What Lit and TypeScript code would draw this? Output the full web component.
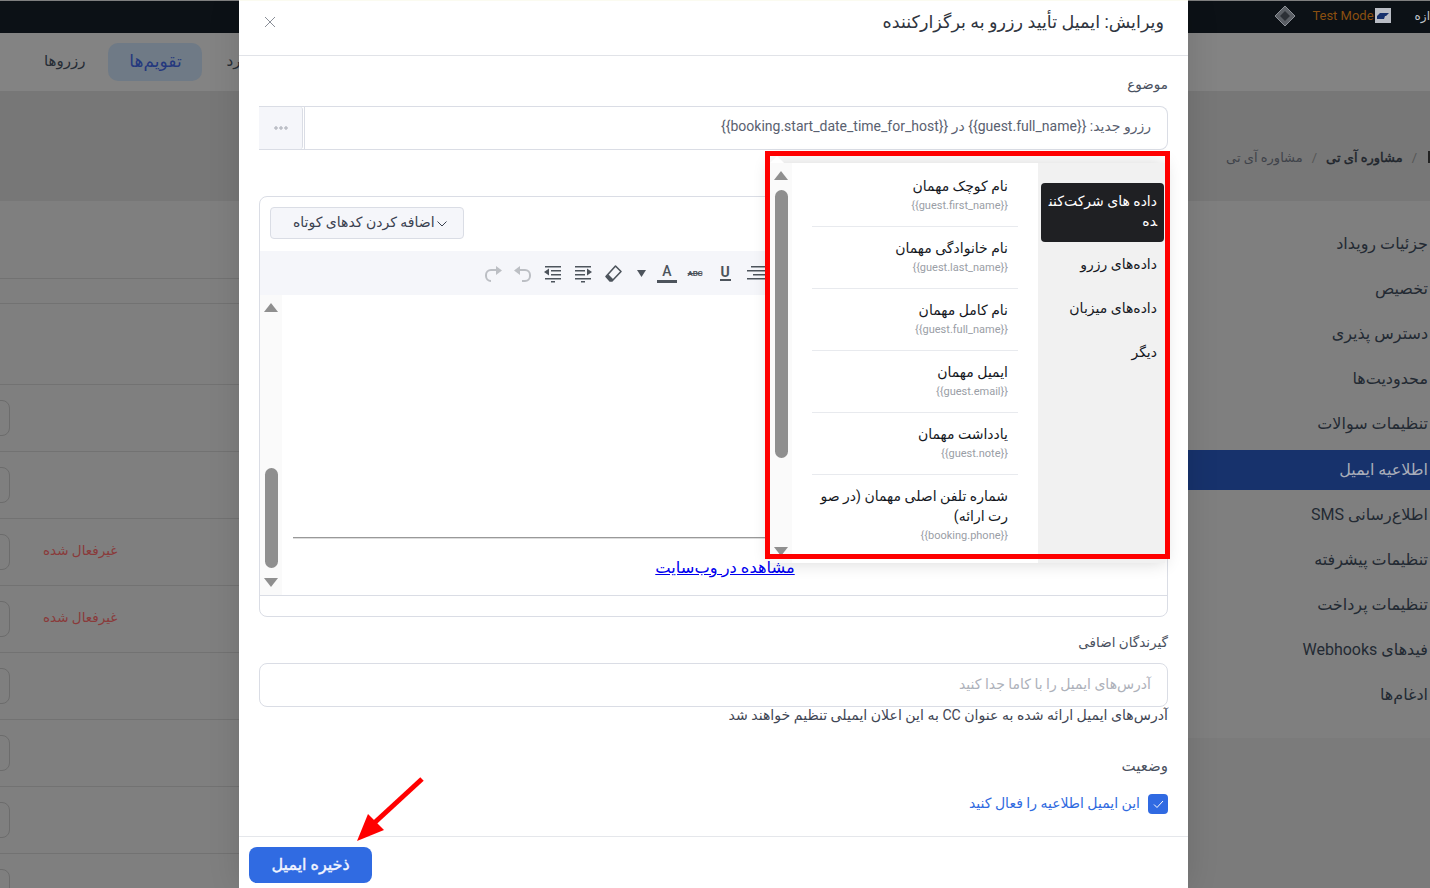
import { LitElement, html, css, svg } from "lit";
import { customElement } from "lit/decorators.js";

const sideItems = ["جزئیات رویداد","تخصیص","دسترس پذیری","محدودیت‌ها","تنظیمات سوالات","اطلاعیه ایمیل","اطلاع‌رسانی SMS","تنظیمات پیشرفته","تنظیمات پرداخت","فیدهای Webhooks","ادغام‌ها"];
const vars = [
  ["نام کوچک مهمان","{{guest.first_name}}"],
  ["نام خانوادگی مهمان","{{guest.last_name}}"],
  ["نام کامل مهمان","{{guest.full_name}}"],
  ["ایمیل مهمان","{{guest.email}}"],
  ["یادداشت مهمان","{{guest.note}}"],
  ["شماره تلفن اصلی مهمان (در صورت ارائه)","{{booking.phone}}"],
];
const rows = [false,false,true,true,false,false,false,false];

const ic = (c: unknown) => html`<svg class="ico" viewBox="0 0 20 20" width="20" height="20">${c}</svg>`;
const lines = (arr: number[][], col: string) => arr.map(([x1,x2,y]) => svg`<rect x=${x1} y=${y} width=${x2-x1} height="1.5" fill=${col}></rect>`);
const dk = "#4d545c";

@customElement("app-root")
export class AppRoot extends LitElement {
  static styles = css`
    :host { display: block; width: 1430px; height: 888px; position: relative; overflow: hidden; font-family: Roboto, "DejaVu Sans", sans-serif; background: #7f7f7f; }
    * { box-sizing: border-box; }
    .page { width: 1430px; height: 888px; display: flex; flex-direction: column; direction: ltr; }
    .top { height: 32px; margin-top: 1px; background: #0c1116; display: flex; align-items: center; justify-content: flex-end; flex: none; overflow: hidden; padding-bottom: 3px; }
    .diamond { margin-right: 16px; display: block; }
    .tm { color: #8a4f10; font-size: 13px; margin-right: 1px; }
    .tmi { width: 16px; height: 15px; background: #b9bcc4; display: flex; align-items: center; justify-content: center; margin-right: 24px; }
    .fresh { color: #c2c5cb; font-size: 12px; direction: rtl; white-space: nowrap; }
    .nav { height: 58px; background: #838383; flex: none; display: flex; align-items: center; padding-left: 44px; }
    .nav span { font-size: 15px; color: #262c35; padding-bottom: 2px; }
    .nav .pill { margin-left: 23px; width: 94px; height: 38px; border-radius: 10px; background: #6f7a86; display: flex; align-items: center; justify-content: center; color: #24387e; font-size: 17px; padding-bottom: 3px; }
    .nav .navc { margin-left: 24px; }
    .band { height: 110px; background: #777; flex: none; display: flex; align-items: center; justify-content: flex-end; gap: 9px; padding-top: 22px; font-size: 13px; color: #333; }
    .band .dim { color: #3f434a; }
    .band .sl { color: #555; }
    .band b { color: #20252c; font-weight: 400; -webkit-text-stroke: .4px #20252c; }
    .bmark { width: 2px; height: 12px; background: #222; margin-left: 2px; }
    .main { flex: 1; display: flex; min-height: 0; }
    .rows { flex: 1; overflow: hidden; }
    .row { height: 67px; border-bottom: 1px solid #727272; display: flex; align-items: center; position: relative; }
    .rowa { height: 78px; }
    .rowb { height: 25px; }
    .rowc { height: 81px; }
    .chip { width: 30px; height: 36px; margin-left: -20px; border: 1px solid #6c6c6c; border-radius: 8px; flex: none; }
    .off { margin-left: 33px; color: #8a3a3a; font-size: 13.5px; direction: rtl; padding-bottom: 4px; }
    .side { width: 242px; flex: none; height: 537px; direction: rtl; padding-top: 20px; background: #7f7f7f; }
    .si { height: 45px; padding-right: 2px; display: flex; align-items: center; font-size: 16px; color: #232a33; white-space: nowrap; }
    .si.act { background: #17326c; color: #a8adb9; height: 40px; margin: 4px 0 1.5px; padding-bottom: 2px; }
    .fband { position: absolute; left: 1188px; top: 738px; width: 242px; height: 150px; background: #7b7b7b; }

    .modal { position: absolute; left: 239px; top: 0; width: 949px; height: 888px; background: #fff; border-top: 1px solid #fbfbf0; display: flex; flex-direction: column; direction: rtl; box-shadow: 0 0 30px rgba(0,0,0,.12); color: #3c4350; }
    .mh { height: 55px; flex: none; border-bottom: 1px solid #e1e3e8; display: flex; align-items: center; justify-content: space-between; padding: 0 24px 13px 25px; }
    .mh h2 { margin: 0; font-size: 17.6px; font-weight: 400; color: #2f3540; }
    .close { display: block; }
    .mb { flex: 1; padding: 19px 20px 0; display: flex; flex-direction: column; min-height: 0; }
    .lab { font-size: 13.5px; line-height: 18px; height: 20px; color: #4a5160; }
    .inp { height: 44px; border: 1px solid #dadde5; border-radius: 8px; display: flex; align-items: center; padding: 0 16px; font-size: 14px; color: #5a6170; margin-top: 11px; flex: none; }
    .subj { padding: 0; overflow: hidden; border-left: 0; border-radius: 0 8px 8px 0; }
    .subj .v { flex: 1; height: 100%; display: flex; align-items: center; padding: 0 16px 5px; white-space: nowrap; border-left: 1px solid #dadde5; }
    .more { width: 44px; height: 100%; background: #f5f6fa; border-right: 1px solid #dadde5; border-radius: 0 3px 3px 0; margin-right: 1px; display: flex; align-items: center; justify-content: center; flex: none; }
    .ed { margin-top: 46px; height: 421px; border: 1px solid #dadde5; border-radius: 8px; flex: none; direction: ltr; padding-top: 10px; }
    .sc { margin-left: 10px; width: 194px; height: 32px; border: 1px solid #dadde5; border-radius: 4px; background: #f5f6fa; display: flex; align-items: center; gap: 2px; padding-left: 22px; padding-bottom: 2px; font-size: 14px; color: #3a4150; }
    .sc span { direction: rtl; white-space: nowrap; }
    .sc svg { flex: none; margin-top: 3px; }
    .tbar { margin-top: 12px; height: 44px; background: #f5f6fa; display: flex; align-items: center; padding-left: 218px; }
    .tb { width: 30px; height: 30px; display: flex; align-items: center; justify-content: center; flex: none; color: #4d545c; }
    .tb.n { width: 26px; }
    .tA { font-size: 14px; line-height: 14px; border-bottom: 3px solid #4d545c; width: 20px; text-align: center; font-weight: 500; padding-bottom: 2px; }
    .tS { font-size: 8px; font-weight: 700; text-decoration: line-through; letter-spacing: -.3px; }
    .tU { font-size: 14px; line-height: 14px; font-weight: 700; border-bottom: 2px solid #4d545c; width: 11px; text-align: center; }
    .ea { height: 301px; border-bottom: 1px solid #dadde5; display: flex; }
    .sb { width: 22px; background: #fafafa; flex: none; display: flex; flex-direction: column; align-items: center; }
    .up { width: 0; height: 0; border-left: 7.5px solid transparent; border-right: 7.5px solid transparent; border-bottom: 9px solid #8f8f8f; flex: none; }
    .dn { width: 0; height: 0; border-left: 7.5px solid transparent; border-right: 7.5px solid transparent; border-top: 9px solid #8f8f8f; flex: none; }
    .th { width: 13px; border-radius: 6.5px; background: #8f8f8f; flex: none; }
    .sb1 { padding-top: 8px; }
    .sb1 .th { margin-top: 156px; height: 100px; }
    .sb1 .dn { margin-top: 10px; }
    .ec { flex: 1; padding: 0 10px 17px 11px; display: flex; flex-direction: column; justify-content: flex-end; text-align: center; }
    .ec hr { width: 100%; height: 2px; margin: 0 0 19px; border: 0; border-top: 1px solid #999; border-bottom: 1px solid #ddd; }
    .ec a { font-family: "Liberation Serif", "DejaVu Sans", serif; font-size: 16.3px; line-height: 20px; color: #0000ee; text-decoration: underline; direction: rtl; }
    .lab2 { margin-top: 16px; }
    .lab2 + .inp { margin-top: 10px; }
    .ph { color: #adb1ba; padding-bottom: 2px; }
    .help { font-size: 14.1px; line-height: 16px; height: 18px; color: #3f4654; white-space: nowrap; }
    .lab3 { margin-top: 32px; font-size: 15px; }
    .chk { margin-top: 17px; display: flex; align-items: center; gap: 8px; color: #2f6ae0; font-size: 14px; }
    .chk span:last-child { padding-bottom: 2px; }
    .box { width: 20px; height: 20px; border-radius: 4px; background: #306ae2; display: flex; align-items: center; justify-content: center; flex: none; }
    .mf { height: 52px; flex: none; border-top: 1px solid #e5e7eb; display: flex; justify-content: flex-end; padding: 10px 10px 0; }
    .save { width: 123px; height: 36px; border: 0; border-radius: 8px; background: #306be2; color: #f2f5ff; font: 400 16px Roboto, "DejaVu Sans", sans-serif; -webkit-text-stroke: .4px #f2f5ff; direction: rtl; padding-bottom: 3px; }

    .pop { position: absolute; left: 531px; top: 162px; width: 395px; height: 400px; background: #fff; box-shadow: 0 0 16px rgba(0,0,0,.16); display: flex; direction: ltr; }
    .pop::before { content: ""; position: absolute; left: 2px; top: -5px; width: 10px; height: 10px; background: #fff; transform: rotate(45deg); }
    .sb2 { padding-top: 8px; height: 400px; position: relative; }
    .sb2 .th { margin-top: 10px; height: 268px; }
    .sb2 .dn { margin-top: 89px; }
    .list { width: 246px; flex: none; padding: 2px 20px 0; direction: rtl; overflow: hidden; }
    .it { padding: 11px 10px 12px 6px; border-bottom: 1px solid #e8eaee; }
    .it:last-child { border-bottom: 0; }
    .nm { font-size: 14px; line-height: 20px; color: #15181e; word-break: break-all; }
    .cd { font-size: 11px; line-height: 20px; margin-bottom: -2px; color: #9a9ea6; }
    .tabs { width: 127px; flex: none; background: #f1f1f1; direction: rtl; padding: 20px 1px 0 3px; }
    .tab { height: 44px; padding: 12px 7px; font-size: 14px; line-height: 20px; color: #15181e; white-space: nowrap; }
    .tab.on { height: 59px; padding: 8px 7px; background: #1f2023; color: #fff; border-radius: 4px; white-space: normal; word-break: break-all; }
    .red { position: absolute; left: 526px; top: 150px; width: 405px; height: 408px; border: 5px solid #f00; pointer-events: none; }
    .arrow { position: absolute; left: 111px; top: 769px; display: block; }
  `;

  render() {
    return html`
      <div class="page">
        <div class="top">
          <svg class="diamond" width="22" height="22" viewBox="0 0 22 22"><path d="M11 1 21 11 11 21 1 11Z" fill="#5a5e64" stroke="#8b8f96" stroke-width="1"/><path d="M11 6 16 11 11 16 6 11Z" fill="#2c3036"/></svg>
          <span class="tm">Test Mode</span>
          <span class="tmi"><svg width="12" height="6" viewBox="0 0 12 6"><path d="M3 0H12L9 3 H0ZM0 3H8L7 6H0Z" fill="#16306c"/></svg></span>
          <span class="fresh">ازه</span>
        </div>
        <div class="nav"><span>رزروها</span><span class="pill">تقویم‌ها</span><span class="navc">کارکرد</span></div>
        <div class="band"><span class="dim">مشاوره آی تی</span><span class="sl">/</span><b>مشاوره آی تی</b><span class="sl">/</span><span class="bmark"></span></div>
        <div class="main">
          <div class="rows">
            <div class="row rowa"></div>
            <div class="row rowb"></div>
            <div class="row rowc"></div>
            ${rows.map(r => html`<div class="row"><span class="chip"></span>${r ? html`<span class="off">غیرفعال شده</span>` : ""}</div>`)}
          </div>
          <div class="side">${sideItems.map((s, i) => html`<div class="si ${i === 5 ? "act" : ""}">${s}</div>`)}</div>
        </div>
      </div>
      <div class="fband"></div>

      <div class="modal">
        <div class="mh">
          <h2>ویرایش: ایمیل تأیید رزرو به برگزارکننده</h2>
          <svg class="close" width="12" height="12" viewBox="0 0 12 12"><path d="M1 1 11 11M11 1 1 11" stroke="#8a8f98" stroke-width="1"/></svg>
        </div>
        <div class="mb">
          <div class="lab">موضوع</div>
          <div class="inp subj">
            <div class="v">رزرو جدید: {{guest.full_name}} در {{booking.start_date_time_for_host}}</div>
            <div class="more"><svg width="14" height="4" viewBox="0 0 14 4"><g fill="none" stroke="#a0a4ad"><circle cx="2" cy="2" r="1.2"/><circle cx="7" cy="2" r="1.2"/><circle cx="12" cy="2" r="1.2"/></g></svg></div>
          </div>
          <div class="ed">
            <div class="sc"><span>اضافه کردن کدهای کوتاه</span><svg width="10" height="6" viewBox="0 0 10 6"><path d="M.5.5 5 5 9.500.5" fill="none" stroke="#3a4150"/></svg></div>
            <div class="tbar">
              <span class="tb">${ic(svg`<path d="M14 7H8a5 5 0 0 0-5 5v1a5 5 0 0 0 5 5" fill="none" stroke="#bcbfc4" stroke-width="2"/><path d="M13 3l6 4.500-6 4.500z" fill="#bcbfc4"/>`)}</span>
              <span class="tb">${ic(svg`<path d="M6 7h6a5 5 0 0 1 5 5v1a5 5 0 0 1-5 5H9" fill="none" stroke="#bcbfc4" stroke-width="2"/><path d="M7 3 1 7.500l6 4.500z" fill="#bcbfc4"/>`)}</span>
              <span class="tb">${ic(svg`${lines([[2,18,3],[8,18,7],[8,18,11],[2,18,15],[8,12,18]], dk)}<path d="M1 9 6 5.500v7z" fill=${dk}/>`)}</span>
              <span class="tb">${ic(svg`${lines([[2,18,3],[2,12,7],[2,12,11],[2,18,15],[8,12,18]], dk)}<path d="M19 9 14 5.500v7z" fill=${dk}/>`)}</span>
              <span class="tb">${ic(svg`<path d="M12.500 3 18 8.500 9 18H7L3 13.500Z" fill="none" stroke=${dk} stroke-width="1.600" stroke-linejoin="round"/><path d="M3 13.500 7 18H9L10.500 16.500 5.500 11.500Z" fill=${dk}/>`)}</span>
              <span class="tb n"><svg width="9" height="7" viewBox="0 0 9 7"><path d="M0 0H9L4.500 7Z" fill=${dk}/></svg></span>
              <span class="tb n"><span class="tA">A</span></span>
              <span class="tb"><span class="tS">ABC</span></span>
              <span class="tb"><span class="tU">U</span></span>
              <span class="tb">${ic(svg`${lines([[6,20,3],[2,20,7],[8,20,11],[2,20,15]], dk)}`)}</span>
            </div>
            <div class="ea">
              <div class="sb sb1"><span class="up"></span><span class="th"></span><span class="dn"></span></div>
              <div class="ec"><hr /><a href="#">مشاهده در وب‌سایت</a></div>
            </div>
          </div>
          <div class="lab lab2">گیرندگان اضافی</div>
          <div class="inp"><span class="ph">آدرس‌های ایمیل را با کاما جدا کنید</span></div>
          <div class="help">آدرس‌های ایمیل ارائه شده به عنوان CC به این اعلان ایمیلی تنظیم خواهند شد</div>
          <div class="lab lab3">وضعیت</div>
          <div class="chk"><span class="box"><svg width="11" height="9" viewBox="0 0 11 9"><path d="M1 4.500 4 7.500 10 1" fill="none" stroke="#fff" stroke-width="1"/></svg></span><span>این ایمیل اطلاعیه را فعال کنید</span></div>
        </div>
        <div class="mf"><button class="save">ذخیره ایمیل</button></div>

        <div class="pop">
          <div class="sb sb2"><span class="up"></span><span class="th"></span><span class="dn"></span></div>
          <div class="list">${vars.map(([n, c]) => html`<div class="it"><div class="nm">${n}</div><div class="cd">${c}</div></div>`)}</div>
          <div class="tabs">
            <div class="tab on">داده های شرکت‌کننده</div>
            <div class="tab">داده‌های رزرو</div>
            <div class="tab">داده‌های میزبان</div>
            <div class="tab">دیگر</div>
          </div>
        </div>
        <div class="red"></div>
        <svg class="arrow" width="80" height="76" viewBox="0 0 80 76"><path d="M72 9 22 55" stroke="#f00" stroke-width="5"/><path d="M7 71 18 44 34 60Z" fill="#f00"/></svg>
      </div>
    `;
  }
}
